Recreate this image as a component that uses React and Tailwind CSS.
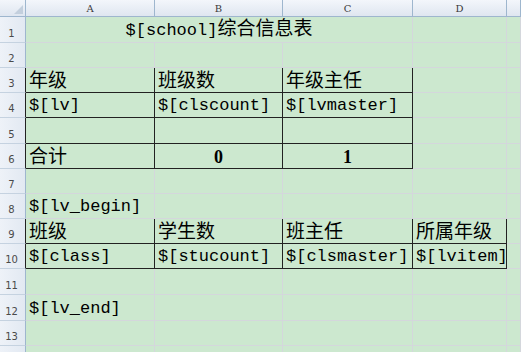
import React from "react";

const heights = [26, 25, 25, 25, 26, 25, 25, 25, 25, 25, 26, 26, 25, 25];

const mono = "font-['Liberation_Mono',monospace] text-[17px]";
const cjk = "font-['Noto_Sans_CJK_SC',sans-serif] text-[19px] leading-[22px]";

function M({ children }) {
  return <span className={mono}>{children}</span>;
}

function C({ children }) {
  return <span className={cjk}>{children}</span>;
}

const bold = (t) => <span className="font-['Liberation_Serif',serif] text-[18px] font-bold">{t}</span>;

// cells for columns A..E: box = black frame, bb = black bottom only
const rows = [
  [{ span: 3, center: true, content: <><M>$[school]</M><C>综合信息表</C></> }, {}, {}],
  [{ bb: true }, { bb: true }, { bb: true }, {}, {}],
  [{ box: true, content: <C>年级</C> }, { box: true, content: <C>班级数</C> }, { box: true, content: <C>年级主任</C> }, {}, {}],
  [{ box: true, content: <M>$[lv]</M> }, { box: true, content: <M>$[clscount]</M> }, { box: true, content: <M>$[lvmaster]</M> }, {}, {}],
  [{ box: true }, { box: true }, { box: true }, {}, {}],
  [{ box: true, content: <C>合计</C> }, { box: true, center: true, content: bold("0") }, { box: true, center: true, content: bold("1") }, {}, {}],
  [{}, {}, {}, {}, {}],
  [{ bb: true, content: <M>$[lv_begin]</M> }, { bb: true }, { bb: true }, { bb: true }, {}],
  [{ box: true, content: <C>班级</C> }, { box: true, content: <C>学生数</C> }, { box: true, content: <C>班主任</C> }, { box: true, content: <C>所属年级</C> }, {}],
  [{ box: true, content: <M>$[class]</M> }, { box: true, content: <M>$[stucount]</M> }, { box: true, content: <M>$[clsmaster]</M> }, { box: true, content: <M>$[lvitem]</M> }, {}],
  [{}, {}, {}, {}, {}],
  [{ content: <M>$[lv_end]</M> }, {}, {}, {}, {}],
  [{}, {}, {}, {}, {}],
  [{}, {}, {}, {}, {}],
];

const boxedRows = [2, 3, 4, 5, 8, 9];

export default function App() {
  return (
    <div className="h-[352px] w-[521px] overflow-hidden bg-[#cce8cf] text-black">
      <div
        className="grid"
        style={{
          gridTemplateColumns: "26px 129px 128px 130px 94px 1fr",
          gridTemplateRows: `17px ${heights.map((h) => h + "px").join(" ")}`,
        }}
      >
        {/* corner + column letters */}
        <div className="relative border-r border-b border-[#9eb6ce] bg-gradient-to-b from-[#f3f6fb] to-[#dfe6f0]">
          <div className="absolute bottom-[2px] right-[2px] h-0 w-0 border-b-[9px] border-l-[9px] border-b-[#c3cfdd] border-l-transparent" />
        </div>
        {["A", "B", "C", "D", ""].map((l, i) => (
          <div
            key={i}
            className="flex items-center justify-center border-r border-b border-[#9eb6ce] bg-gradient-to-b from-[#f3f6fb] to-[#dfe6f0] font-['DejaVu_Serif',serif] text-[10px] text-[#3a3a3a]"
          >
            {l}
          </div>
        ))}

        {rows.map((cells, r) => (
          <React.Fragment key={r}>
            <div
              className={`flex items-end justify-center pb-[3px] pr-[2px] border-b border-[#c5d2e0] bg-gradient-to-r from-[#eef2f8] to-[#e2e9f2] font-['DejaVu_Sans',sans-serif] text-[10px] leading-none text-[#4a4a4a] border-r ${
                boxedRows.includes(r) ? "border-r-[#222]" : "border-r-[#9eb6ce]"
              }`}
            >
              {r < 13 ? r + 1 : ""}
            </div>
            {cells.map((c, i) => (
              <div
                key={i}
                className={`flex items-end whitespace-nowrap px-[3px] border-r border-b ${
                  c.box ? "border-r-[#222] border-b-[#222]" : "border-r-[#d4d7dc] border-b-[#d4d7dc]"
                } ${c.bb ? "border-b-[#222]" : ""} ${c.center ? "justify-center" : ""} ${c.span === 3 ? "col-span-3" : ""}`}
              >
                <span className="leading-[22px]">{c.content}</span>
              </div>
            ))}
          </React.Fragment>
        ))}
      </div>
    </div>
  );
}
